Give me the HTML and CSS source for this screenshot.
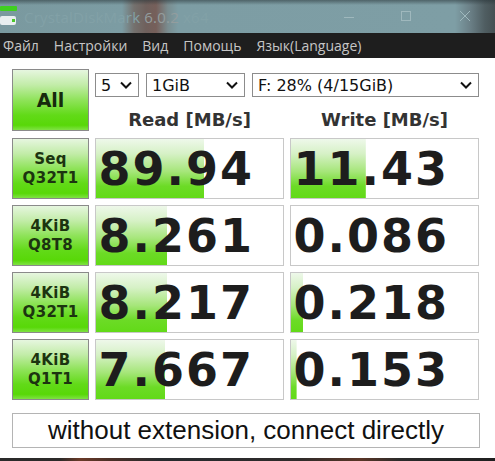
FILE: index.html
```html
<!DOCTYPE html>
<html lang="ru">
<head>
<meta charset="utf-8">
<title>CrystalDiskMark 6.0.2 x64</title>
<link rel="stylesheet" href="styles.css">
</head>
<body>
<div class="window">
  <div class="titlebar">
    <svg class="app-icon" width="18" height="22" viewBox="0 0 18 22">
      <rect x="0" y="0" width="17" height="5" rx="1" fill="#3fcf1f"/>
      <rect x="0" y="10" width="16" height="9" rx="2" fill="#e8eeef"/>
      <rect x="12" y="13" width="3" height="3" fill="#49c82a"/>
    </svg>
    <span class="title">CrystalDiskMark <span class="ver">6.0.2</span> x64</span>
    <div class="controls">
      <span class="ctl min"></span>
      <span class="ctl max"></span>
      <svg class="ctl close" width="12" height="12" viewBox="0 0 12 12"><path d="M1 1L11 11M11 1L1 11" stroke="#9fb8bd" stroke-width="1"/></svg>
    </div>
  </div>
  <div class="menubar">
    <span>Файл</span><span>Настройки</span><span>Вид</span><span>Помощь</span><span>Язык(Language)</span>
  </div>
  <div class="main">
    <div class="grid">
      <div class="btn all">All</div>
      <div class="topright">
        <div class="combos">
          <div class="combo c1"><span>5</span><svg width="12" height="8" viewBox="0 0 12 8"><path d="M1 1.5L6 6.5L11 1.5" fill="none" stroke="#111" stroke-width="2"/></svg></div>
          <div class="combo c2"><span>1GiB</span><svg width="12" height="8" viewBox="0 0 12 8"><path d="M1 1.5L6 6.5L11 1.5" fill="none" stroke="#111" stroke-width="2"/></svg></div>
          <div class="combo c3"><span>F: 28% (4/15GiB)</span><svg width="12" height="8" viewBox="0 0 12 8"><path d="M1 1.5L6 6.5L11 1.5" fill="none" stroke="#111" stroke-width="2"/></svg></div>
        </div>
        <div class="headers">
          <div>Read [MB/s]</div>
          <div>Write [MB/s]</div>
        </div>
      </div>

      <div class="btn">Seq<br>Q32T1</div>
      <div class="val" style="--w:58%">89.94</div>
      <div class="val" style="--w:40%">11.43</div>

      <div class="btn">4KiB<br>Q8T8</div>
      <div class="val" style="--w:38%">8.261</div>
      <div class="val" style="--w:0%">0.086</div>

      <div class="btn">4KiB<br>Q32T1</div>
      <div class="val" style="--w:38%">8.217</div>
      <div class="val" style="--w:6.5%">0.218</div>

      <div class="btn">4KiB<br>Q1T1</div>
      <div class="val" style="--w:37%">7.667</div>
      <div class="val" style="--w:3%">0.153</div>
    </div>
    <div class="comment">without extension, connect directly</div>
  </div>
  <div class="bottombar"></div>
</div>
</body>
</html>
```

FILE: styles.css
```css
* { box-sizing: border-box; }

html, body {
  margin: 0;
  padding: 0;
  background: #ffffff;
}

.window {
  width: 495px;
  height: 461px;
  overflow: hidden;
  display: flex;
  flex-direction: column;
}

.titlebar {
  height: 33px;
  flex: none;
  display: flex;
  align-items: center;
  background:
    linear-gradient(to bottom, rgba(40, 52, 56, 0.55) 0, rgba(40, 52, 56, 0) 5px),
    linear-gradient(to right, #7a999f 0, #7c9ca3 122px, #74716e 134px, #6f605c 146px, #765f5a 156px, #7a8d90 168px, #7d9da4 178px, #7e9ea5 455px, #6b8087 470px, #4f5d61 485px, #455053 495px);
  font-family: "Open Sans", "Noto Sans", sans-serif;
}

.app-icon {
  margin: 0 6px 0 0;
  flex: none;
}

.title {
  font-size: 15px;
  color: #82a1a7;
  letter-spacing: 0.2px;
}

.title .ver {
  color: #939d9e;
}

.controls {
  margin-left: auto;
  display: flex;
  align-items: center;
  height: 100%;
}

.ctl { display: block; }

.ctl.min {
  width: 10px;
  height: 1px;
  background: #9fb8bd;
  margin-right: 47px;
  margin-top: 1px;
}

.ctl.max {
  width: 10px;
  height: 10px;
  border: 1px solid #9fb8bd;
  margin-right: 48px;
  margin-top: -2px;
}

.ctl.close {
  margin-right: 24px;
  margin-top: -2px;
}

.menubar {
  height: 25px;
  flex: none;
  background: #1e1e1e;
  display: flex;
  align-items: center;
  gap: 15px;
  padding-left: 3px;
  font-family: "Open Sans", "Noto Sans", sans-serif;
  font-size: 14px;
  color: #c6c6c6;
}

.main {
  height: 400px;
  flex: none;
  padding: 11px 0 0 12px;
  background: #ffffff;
}

.grid {
  display: grid;
  grid-template-columns: 77px 189px 189px;
  grid-template-rows: 63px repeat(4, 61px);
  gap: 6px;
}

.btn {
  border: 1px solid #8a8a8a;
  background: linear-gradient(to bottom, #e6f6df 0%, #c2eca8 25%, #8fe35a 50%, #62da18 75%, #58d808 92%, #7fe244 100%);
  display: flex;
  align-items: center;
  justify-content: center;
  text-align: center;
  font-family: "DejaVu Sans", Verdana, sans-serif;
  font-weight: bold;
  font-size: 15px;
  line-height: 19px;
  letter-spacing: 0.3px;
  color: #1c3410;
  padding-top: 1px;
}

.btn.all {
  height: 62px;
  font-size: 19px;
  letter-spacing: 0;
  color: #162a0c;
}

.topright {
  grid-column: 2 / 4;
  display: flex;
  flex-direction: column;
}

.combos {
  display: flex;
  gap: 7px;
  margin-top: 4px;
  height: 24px;
}

.combo {
  border: 1px solid #8c8c8c;
  background: #ffffff;
  display: flex;
  align-items: center;
  justify-content: space-between;
  padding: 0 6px 0 5px;
  font-family: "DejaVu Sans", Verdana, sans-serif;
  font-size: 16px;
  color: #111111;
}

.combo svg { flex: none; }

.c1 { width: 44px; }
.c2 { width: 99px; }
.c3 { width: 227px; }

.headers {
  display: grid;
  grid-template-columns: 189px 189px;
  gap: 6px;
  padding-top: 12px;
  font-family: "DejaVu Sans", Verdana, sans-serif;
  font-weight: bold;
  font-size: 18px;
  line-height: 22px;
  color: #333333;
  text-align: center;
}

.val {
  --w: 0%;
  border: 1px solid #c8c8c8;
  background:
    linear-gradient(to bottom, #eef8ea 0%, #d6f1c6 25%, #a6e67a 55%, #6cdb26 80%, #62da18 100%) no-repeat;
  background-size: var(--w) 100%;
  background-color: #ffffff;
  display: flex;
  align-items: center;
  justify-content: flex-end;
  padding-right: 29px;
  font-family: "DejaVu Sans", Verdana, sans-serif;
  font-weight: bold;
  font-size: 46px;
  letter-spacing: 2px;
  color: #1d1d1d;
}

.comment {
  margin-top: 13px;
  width: 468px;
  height: 35px;
  border: 1px solid #b4b4b4;
  display: flex;
  align-items: center;
  justify-content: center;
  font-family: "Liberation Sans", Arial, sans-serif;
  font-size: 26px;
  color: #111111;
}

.bottombar {
  flex: 1;
  background: linear-gradient(to right, #2a2a2a 0, #2c2a29 60px, #6a3a28 80px, #4a2f26 110px, #262a2e 160px, #2f2b2a 300px, #5a3526 360px, #2a2a2a 400px, #1f1f1f 495px);
}
```
